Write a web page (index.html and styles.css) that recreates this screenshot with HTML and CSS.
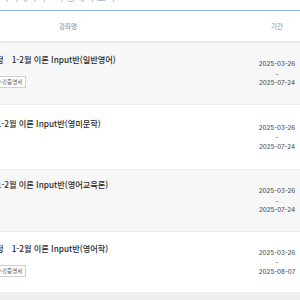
FILE: index.html
```html
<!DOCTYPE html>
<html lang="ko">
<head>
<meta charset="utf-8">
<link rel="stylesheet" href="styles.css">
</head>
<body>
<div class="top"><span class="crumb">마이페이지 &gt; 수강내역 조회</span></div>
<div class="table">
  <div class="thead">
    <div class="c-title">강좌명</div>
    <div class="c-period">기간</div>
  </div>
  <div class="row alt r1">
    <div class="c-title">
      <p class="title ind-a">과정&emsp;1-2월 이론 Input반(일반영어)</p>
      <span class="badge">수강증명서</span>
    </div>
    <div class="c-period">2025-03-26<br>-<br>2025-07-24</div>
  </div>
  <div class="row r2">
    <div class="c-title">
      <p class="title ind-b">과정&emsp;1-2월 이론 Input반(영미문학)</p>
    </div>
    <div class="c-period">2025-03-26<br>-<br>2025-07-24</div>
  </div>
  <div class="row alt r3">
    <div class="c-title">
      <p class="title ind-b">과정&emsp;1-2월 이론 Input반(영어교육론)</p>
    </div>
    <div class="c-period">2025-03-26<br>-<br>2025-07-24</div>
  </div>
  <div class="row r4">
    <div class="c-title">
      <p class="title ind-a">과정&emsp;1-2월 이론 Input반(영어학)</p>
      <span class="badge">수강증명서</span>
    </div>
    <div class="c-period">2025-03-26<br>-<br>2025-08-07</div>
  </div>
</div>
</body>
</html>
```
FILE: styles.css
```css
html, body {
  margin: 0;
  padding: 0;
  background: #ffffff;
  overflow: hidden;
}
body {
  width: 300px;
  height: 300px;
  font-family: "Noto Sans CJK KR", "Noto Sans", sans-serif;
  background: #efefef;
}
.top {
  height: 10px;
  overflow: hidden;
  background: #fff;
}
.crumb {
  display: block;
  margin-top: -9px;
  font-size: 10px;
  line-height: 12px;
  color: #aab6cf;
  white-space: nowrap;
}
.table {
  border-top: 1px solid #8db2f2;
  background: #fff;
}
.thead {
  display: flex;
  height: 30px;
  align-items: center;
  border-bottom: 2px solid #ebebeb;
  font-size: 6.5px;
  color: #8a8a8a;
}
.thead .c-title {
  width: 136px;
  text-align: center;
}
.thead .c-period {
  margin-left: auto;
  width: 46px;
  text-align: center;
}
.row {
  display: flex;
  border-bottom: 1px solid #ececec;
  background: #fff;
}
.row.alt {
  background: #f8f7f7;
}
.row .c-title {
  flex: 1;
  min-width: 0;
  padding-top: 10px;
}
.title {
  margin: 0;
  font-size: 8.2px;
  line-height: 12px;
  font-weight: 500;
  color: #2a2a2a;
  white-space: nowrap;
}
.ind-a { text-indent: -11.6px; }
.ind-b { text-indent: -26.6px; }
.badge {
  display: inline-block;
  margin-left: -7px;
  margin-top: 11px;
  height: 10px;
  line-height: 10px;
  padding: 0 3px;
  border: 1px solid #cfcfcf;
  background: #fff;
  font-size: 5.5px;
  color: #555;
}
.row .c-period {
  width: 46px;
  flex: none;
  text-align: center;
  font-family: "Inter", sans-serif;
  font-weight: 500;
  font-size: 6.2px;
  line-height: 9.5px;
  color: #555;
  padding: 16px 0;
}
.r2 .c-period { padding: 18px 0; }
.r2 .c-title { padding-top: 12px; }
.r3 .c-title { padding-top: 8px; }
```
